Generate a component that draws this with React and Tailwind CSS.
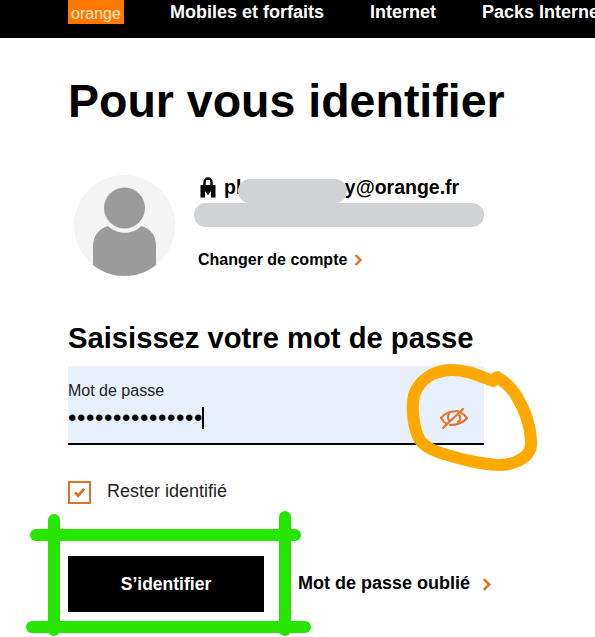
const sans = 'font-["Liberation_Sans",Arial,sans-serif]';

function Chevron({ className }) {
  return (
    <svg viewBox="0 0 8 12" className={className}>
      <path d="M1.5 1 L6.5 6 L1.5 11" fill="none" stroke="#e0701e" strokeWidth="2.4" />
    </svg>
  );
}

function Avatar() {
  return (
    <div className="w-[101px] h-[101px] rounded-full bg-[#f4f4f4] overflow-hidden shrink-0">
      <svg viewBox="0 0 101 101" className="w-full h-full">
        <circle cx="50.5" cy="33" r="20.5" fill="#9b9b9b" />
        <path d="M34 51 C 42 60, 60 60, 67 51 C 77 54, 82 60, 82 72 L 82 101 L 19 101 L 19 72 C 19 60, 25 54, 34 51 Z" fill="#9b9b9b" />
      </svg>
    </div>
  );
}

function LockMark() {
  return (
    <svg viewBox="0 0 16 21" className="w-[16px] h-[21px] mr-[8px] shrink-0 -mt-[2px]">
      <path d="M4.5 10 V5 a3.5 3.5 0 0 1 7 0 V10" fill="none" stroke="#000" strokeWidth="2.4" />
      <path d="M0.5 8 H15.5 V20.5 H11 V14 L8 18 L5 14 V20.5 H0.5 Z" fill="#000" />
    </svg>
  );
}

// hand drawn annotations on top of the screenshot
function Annotations() {
  return (
    <svg className="absolute left-0 top-0 pointer-events-none" width="595" height="637" viewBox="0 0 595 637">
      <path
        d="M493 381 C 480 376, 465 369, 450 370 C 435 371, 420 378, 414 395 C 411 410, 414 430, 420 440 C 426 450, 445 455, 470 461 C 490 465, 505 467, 515 462 C 528 457, 532 450, 531 440 C 530 425, 525 410, 517 397 C 512 388, 505 382, 497 377"
        fill="none"
        stroke="#ffa800"
        strokeWidth="12"
        strokeLinecap="round"
        strokeLinejoin="round"
      />
      <g stroke="#26e600" strokeWidth="12" strokeLinecap="round" fill="none">
        <path d="M36 535 L 295 535" />
        <path d="M32 627 L 305 627" />
        <path d="M54 520 L 54 630" />
        <path d="M285 517 L 285 630" />
      </g>
    </svg>
  );
}

export default function App() {
  return (
    <div className={`relative w-[595px] h-[637px] bg-white overflow-hidden text-black ${sans}`}>
      <header className="h-[38px] bg-black flex items-start pl-[68px] overflow-hidden whitespace-nowrap">
        <div className="w-[56px] h-[24px] bg-[#ff7900] text-[#ffe3c8] text-[16px] leading-[27px] pl-[3px] shrink-0">orange</div>
        <nav className="flex gap-[46px] ml-[46px] text-white font-bold text-[18px] leading-[24px]">
          <span>Mobiles et forfaits</span>
          <span>Internet</span>
          <span>Packs Internet</span>
        </nav>
      </header>

      <main className="pl-[68px] pr-[111px]">
        <h1 className="mt-[34px] font-bold text-[46.5px] leading-[58px] whitespace-nowrap">Pour vous identifier</h1>

        <section className="mt-[45px] flex">
          <div className="ml-[6px]">
            <Avatar />
          </div>
          <div className="ml-[23px] flex-1 relative">
            <div className="flex items-center h-[26px] ml-[2px] font-bold text-[19.5px] whitespace-nowrap">
              <LockMark />
              <span>ph</span>
              <span className="ml-[97px]">y@orange.fr</span>
            </div>
            <div className="absolute left-[40px] top-[4px] w-[109px] h-[24px] rounded-[12px] bg-[#d1d2d4]" />
            <div className="mt-[2px] -ml-[4px] h-[24px] rounded-[12px] bg-[#d1d2d4] w-[290px]" />
            <div className="mt-[23px] flex items-center font-bold text-[16px] leading-[20px] whitespace-nowrap">
              <span>Changer de compte</span>
              <Chevron className="w-[8px] h-[12px] ml-[7px]" />
            </div>
          </div>
        </section>

        <h2 className="mt-[46px] font-bold text-[29.2px] leading-[32px] whitespace-nowrap">Saisissez votre mot de passe</h2>

        <div className="mt-[12px] relative h-[79px] bg-[#e8f0fe] border-b-2 border-black w-[416px]">
          <div className="pt-[15px] text-[16px] leading-[20px] text-[#222]">Mot de passe</div>
          <div className="mt-[6px] flex items-center h-[22px]">
            <span className="text-[24px] tracking-[0.6px] leading-[22px] whitespace-nowrap">•••••••••••••••</span>
            <span className="w-[2px] h-[22px] bg-black ml-[-1px]" />
          </div>
          <svg viewBox="0 0 30 26" className="absolute left-[371px] top-[40px] w-[30px] h-[26px]" fill="none" stroke="#de7a30" strokeWidth="2.2" strokeLinecap="round">
            <path d="M2 12 C 6 7, 11 5, 19 5" />
            <path d="M2 12 C 4 15, 6 17, 8 18" />
            <path d="M28 12 C 24 17, 19 19, 11 19" />
            <path d="M28 12 C 26 9, 25 8, 22 7" />
            <path d="M10 8 C 8 11, 9 14, 11 15" />
            <path d="M19 16 C 22 14, 22 11, 20 9" />
            <path d="M4 22 L 24 3" strokeWidth="2.4" />
          </svg>
        </div>

        <label className="mt-[36px] flex items-center">
          <span className="w-[23px] h-[23px] border-2 border-[#d9722a] flex items-center justify-center">
            <svg viewBox="0 0 14 12" className="w-[13px] h-[11px]">
              <path d="M2 6 L5.5 9.5 L12 2" fill="none" stroke="#e0701e" strokeWidth="3" />
            </svg>
          </span>
          <span className="ml-[16px] text-[18px] leading-[20px] text-[#222] -mt-[4px]">Rester identifié</span>
        </label>

        <div className="mt-[52px] flex items-center whitespace-nowrap">
          <button className="w-[196px] h-[56px] bg-black text-white font-bold text-[17.5px] shrink-0">S’identifier</button>
          <span className="ml-[34px] font-bold text-[18px] -mt-[2px]">Mot de passe oublié</span>
          <Chevron className="w-[9px] h-[13px] ml-[12px] shrink-0" />
        </div>
      </main>

      <Annotations />
    </div>
  );
}
